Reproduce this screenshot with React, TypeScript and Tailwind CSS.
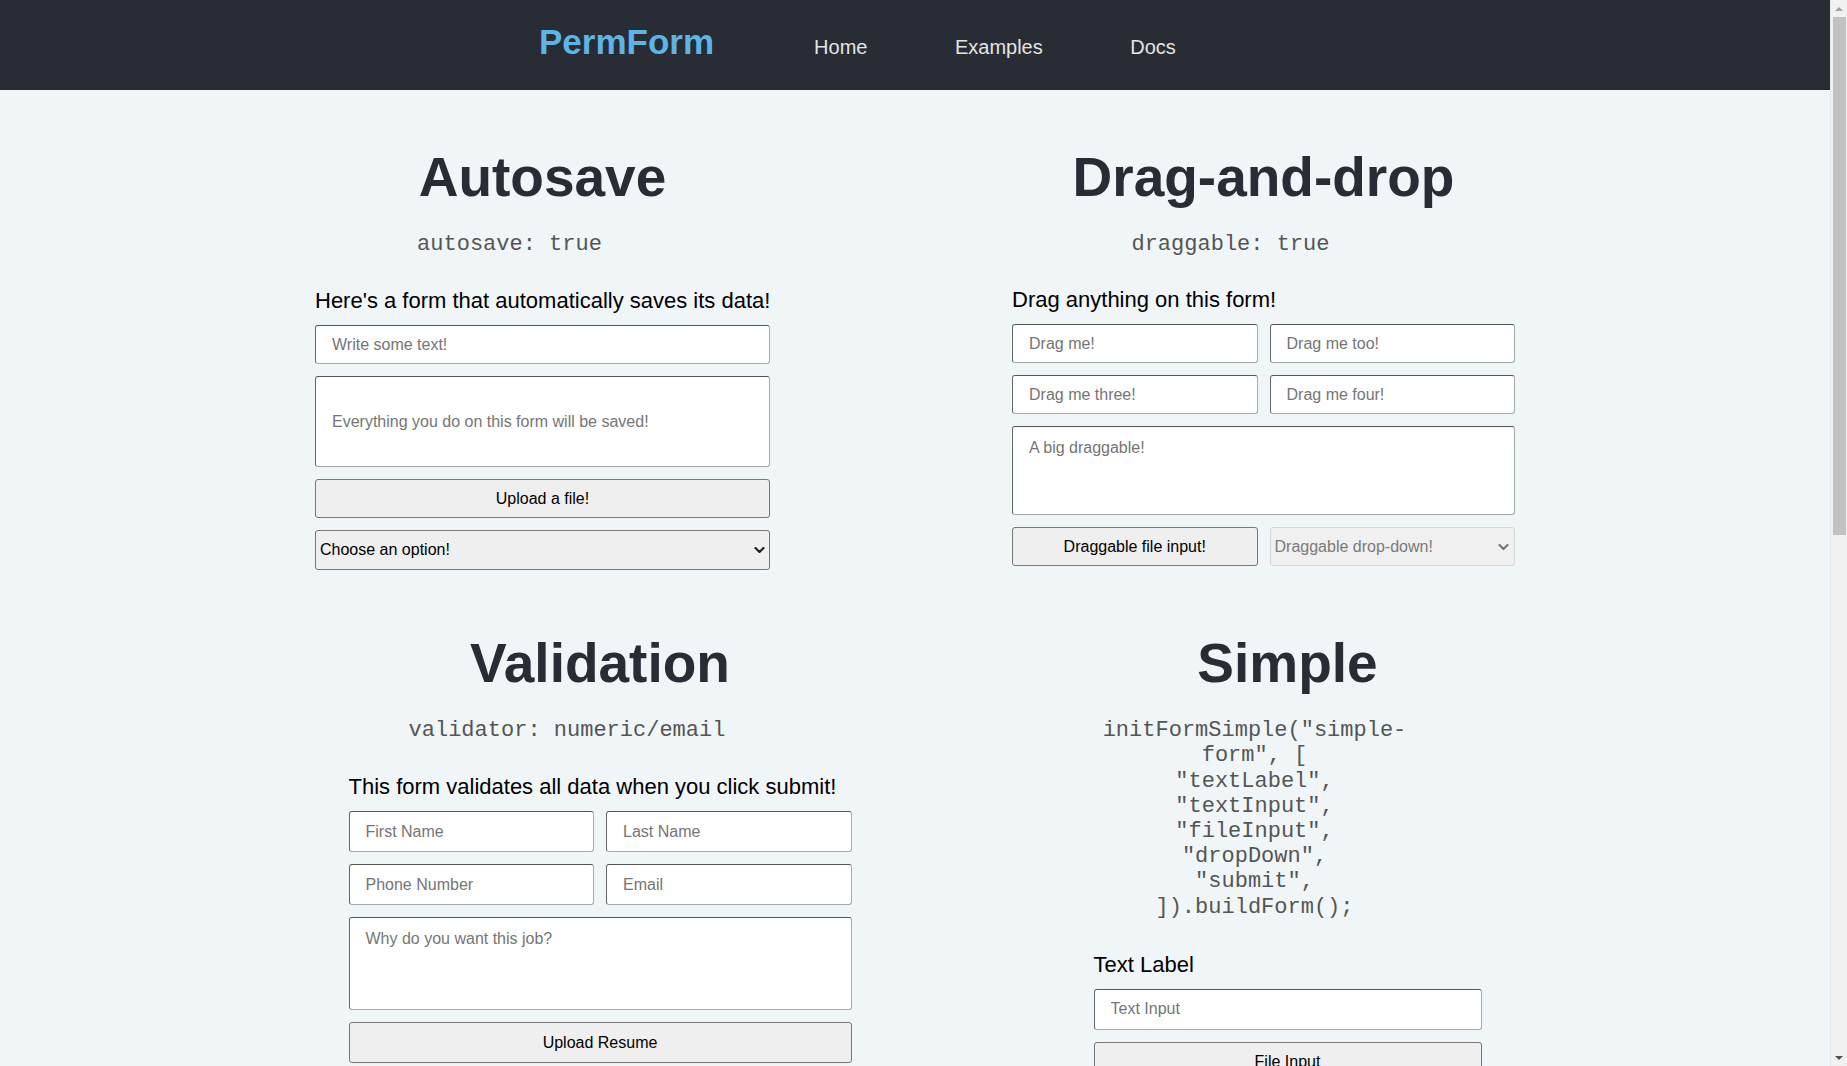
import React from 'react';

const inputCls =
    'w-full rounded-[3px] border border-t-[#555] border-l-[#666] border-r-[#a8a8a8] border-b-[#a8a8a8] bg-white px-4 text-[16px] text-black placeholder:text-[#757575] outline-none';

const buttonCls =
    'w-full rounded-[3px] border border-[#767676] bg-[#efefef] text-[16px] text-black';

function Chevron({ className }: { className: string }) {
    return (
        <svg
            className={className}
            width="11"
            height="7"
            viewBox="0 0 11 7"
            fill="none"
            stroke="currentColor"
            strokeWidth="2.2"
            strokeLinecap="round"
            strokeLinejoin="round"
        >
            <path d="M1.5 1.5l4 4 4-4" />
        </svg>
    );
}

function Select({ label, muted, height }: { label: string; muted?: boolean; height: string }) {
    return (
        <div className="relative w-full">
            <select
                defaultValue=""
                className={
                    muted
                        ? `${height} w-full appearance-none rounded-[3px] border border-[#d6d6d6] bg-[#f0f0f0] pl-1 text-[16px] text-[#7a7a7a] outline-none`
                        : `${height} w-full appearance-none rounded-[3px] border border-[#767676] bg-[#efefef] pl-1 text-[16px] text-black outline-none`
                }
            >
                <option value="" disabled>
                    {label}
                </option>
            </select>
            <Chevron
                className={
                    muted
                        ? 'pointer-events-none absolute right-[6px] top-1/2 -translate-y-1/2 text-[#777]'
                        : 'pointer-events-none absolute right-[5px] top-1/2 -translate-y-1/2 text-[#222]'
                }
            />
        </div>
    );
}

function Section({
    title,
    width,
    code,
    label,
    labelGap,
    children,
}: {
    title: string;
    width: string;
    code: string[];
    label: string;
    labelGap: string;
    children: React.ReactNode;
}) {
    return (
        <section className={`${width} flex flex-col`}>
            <h1 className="text-center text-[55px] font-bold leading-[64px] text-[#282c34]">{title}</h1>
            <div className="mt-[23px] pr-[66px] text-center font-['Courier_New','Liberation_Mono',monospace] text-[22px] leading-[25.2px] text-[#555]">
                {code.map((line) => (
                    <div key={line}>{line}</div>
                ))}
            </div>
            <label className={`${labelGap} whitespace-nowrap text-[22px] leading-[25px] text-black`}>{label}</label>
            <form className="mt-3 flex flex-col gap-3">{children}</form>
        </section>
    );
}

// browser scrollbar as seen in the screenshot
function Scrollbar() {
    return (
        <aside className="sticky top-0 flex h-screen w-[17px] shrink-0 flex-col items-center border-l border-[#e8e8e8] bg-[#f1f1f1]">
            <div className="flex h-[17px] w-full items-center justify-center">
                <div className="h-0 w-0 border-x-[4px] border-b-[4px] border-x-transparent border-b-[#a3a3a3]" />
            </div>
            <div className="h-[518px] w-[13px] bg-[#c1c1c1]" />
            <div className="flex-1" />
            <div className="flex h-[17px] w-full items-center justify-center">
                <div className="h-0 w-0 border-x-[4px] border-t-[4px] border-x-transparent border-t-[#505050]" />
            </div>
        </aside>
    );
}

export default function App() {
    return (
        <div className="flex min-h-screen items-start bg-[#f0f5f8] font-['Liberation_Sans',Arial,sans-serif]">
            <div className="min-w-0 flex-1">
                <nav className="flex h-[90px] items-baseline bg-[#282c34] pl-[539px] pt-[22px]">
                    <a className="text-[35px] font-bold leading-[40px] text-[#5db4e6]">PermForm</a>
                    <div className="ml-[100px] flex items-baseline gap-[87.5px] text-[20px] text-[#e4e4e4]">
                        <a>Home</a>
                        <a>Examples</a>
                        <a>Docs</a>
                    </div>
                </nav>

                <main className="flex flex-wrap justify-center gap-x-[242px] gap-y-[61px] pb-24 pt-[55px]">
                    <Section
                        title="Autosave"
                        width="w-[455px]"
                        code={['autosave: true']}
                        label="Here's a form that automatically saves its data!"
                        labelGap="mt-[31px]"
                    >
                        <input className={`${inputCls} h-[39px]`} placeholder="Write some text!" />
                        <input className={`${inputCls} h-[91px]`} placeholder="Everything you do on this form will be saved!" />
                        <button type="button" className={`${buttonCls} h-[39px]`}>
                            Upload a file!
                        </button>
                        <Select label="Choose an option!" height="h-[40px]" />
                    </Section>

                    <Section
                        title="Drag-and-drop"
                        width="w-[503px]"
                        code={['draggable: true']}
                        label="Drag anything on this form!"
                        labelGap="mt-[30px]"
                    >
                        <div className="grid grid-cols-2 gap-3">
                            <input className={`${inputCls} h-[39px]`} placeholder="Drag me!" />
                            <input className={`${inputCls} h-[39px]`} placeholder="Drag me too!" />
                            <input className={`${inputCls} h-[39px]`} placeholder="Drag me three!" />
                            <input className={`${inputCls} h-[39px]`} placeholder="Drag me four!" />
                            <textarea
                                className={`${inputCls} col-span-2 h-[89px] resize-none pt-[9px]`}
                                placeholder="A big draggable!"
                            />
                            <button type="button" className={`${buttonCls} h-[39px]`}>
                                Draggable file input!
                            </button>
                            <Select label="Draggable drop-down!" height="h-[39px]" muted />
                        </div>
                    </Section>

                    <Section
                        title="Validation"
                        width="w-[503px]"
                        code={['validator: numeric/email']}
                        label="This form validates all data when you click submit!"
                        labelGap="mt-[31px]"
                    >
                        <div className="grid grid-cols-2 gap-3">
                            <input className={`${inputCls} h-[41px]`} placeholder="First Name" />
                            <input className={`${inputCls} h-[41px]`} placeholder="Last Name" />
                            <input className={`${inputCls} h-[41px]`} placeholder="Phone Number" />
                            <input className={`${inputCls} h-[41px]`} placeholder="Email" />
                            <textarea
                                className={`${inputCls} col-span-2 h-[93px] resize-none pt-[9px]`}
                                placeholder="Why do you want this job?"
                            />
                            <button type="button" className={`${buttonCls} col-span-2 h-[41px]`}>
                                Upload Resume
                            </button>
                            <button type="button" className={`${buttonCls} col-span-2 h-[41px]`}>
                                Submit
                            </button>
                        </div>
                    </Section>

                    <Section
                        title="Simple"
                        width="w-[388px]"
                        code={[
                            'initFormSimple("simple-',
                            'form", [',
                            '"textLabel",',
                            '"textInput",',
                            '"fileInput",',
                            '"dropDown",',
                            '"submit",',
                            ']).buildForm();',
                        ]}
                        label="Text Label"
                        labelGap="mt-[32px]"
                    >
                        <input className={`${inputCls} h-[41px]`} placeholder="Text Input" />
                        <button type="button" className={`${buttonCls} h-[41px]`}>
                            File Input
                        </button>
                        <Select label="Drop Down" height="h-[41px]" />
                        <button type="button" className={`${buttonCls} h-[41px]`}>
                            Submit
                        </button>
                    </Section>
                </main>
            </div>
            <Scrollbar />
        </div>
    );
}
